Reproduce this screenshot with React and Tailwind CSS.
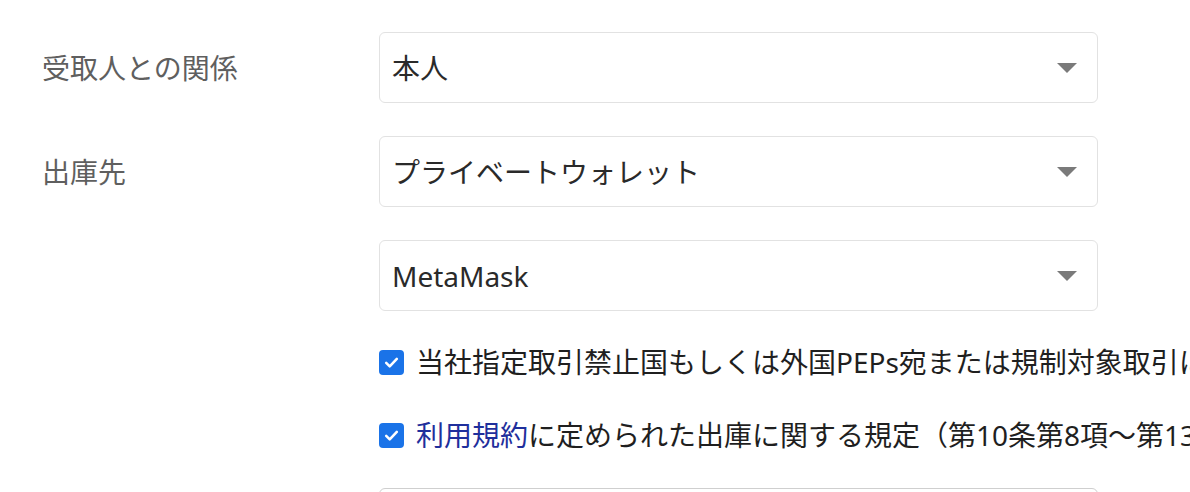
import React from "react";

const font = { fontFamily: '"Noto Sans", "Noto Sans CJK JP", sans-serif' };

function Select({ value }) {
  return (
    <div className="w-[719px] h-[71px] border border-[#e2e2e2] rounded-[6px] bg-white flex items-center justify-between pl-[12px] pr-[20px]">
      <span className="text-[28px] text-[#2a2a2a] leading-none">{value}</span>
      <span className="w-0 h-0 border-l-[10px] border-r-[10px] border-t-[10px] border-l-transparent border-r-transparent border-t-[#7a7a7a]" />
    </div>
  );
}

function Check({ children }) {
  return (
    <div className="h-[40px] flex items-center gap-[12px] whitespace-nowrap">
      <span className="w-[25px] h-[25px] shrink-0 rounded-[4px] bg-[#1a73e8] flex items-center justify-center">
        <svg width="17" height="17" viewBox="0 0 24 24" fill="none" stroke="white" strokeWidth="3.6" strokeLinecap="round" strokeLinejoin="round">
          <path d="M4.5 12.5l5 5L19.5 7" />
        </svg>
      </span>
      <span className="text-[28px] text-[#1f1f1f] leading-none">{children}</span>
    </div>
  );
}

export default function App() {
  return (
    <div className="w-[1190px] h-[492px] overflow-hidden bg-white" style={font}>
      <div className="pt-[32px] pl-[42px] grid grid-cols-[337px_auto] gap-y-[33px] items-center">
        <div className="text-[28px] text-[#5f5f5f] leading-none">受取人との関係</div>
        <Select value="本人" />
        <div className="text-[28px] text-[#5f5f5f] leading-none">出庫先</div>
        <Select value="プライベートウォレット" />
        <div />
        <Select value="MetaMask" />
        <div />
        <div className="flex flex-col gap-[33px] -mt-[2px]">
          <Check>当社指定取引禁止国もしくは外国PEPs宛または規制対象取引に該当しないことを確認しました</Check>
          <Check>
            <span className="text-[#1f2f9c]">利用規約</span>に定められた出庫に関する規定（第10条第8項〜第13項）を確認しました
          </Check>
        </div>
        <div />
        <div className="w-[719px] h-[71px] border border-[#cfcfcf] rounded-[6px] bg-white" />
      </div>
    </div>
  );
}
